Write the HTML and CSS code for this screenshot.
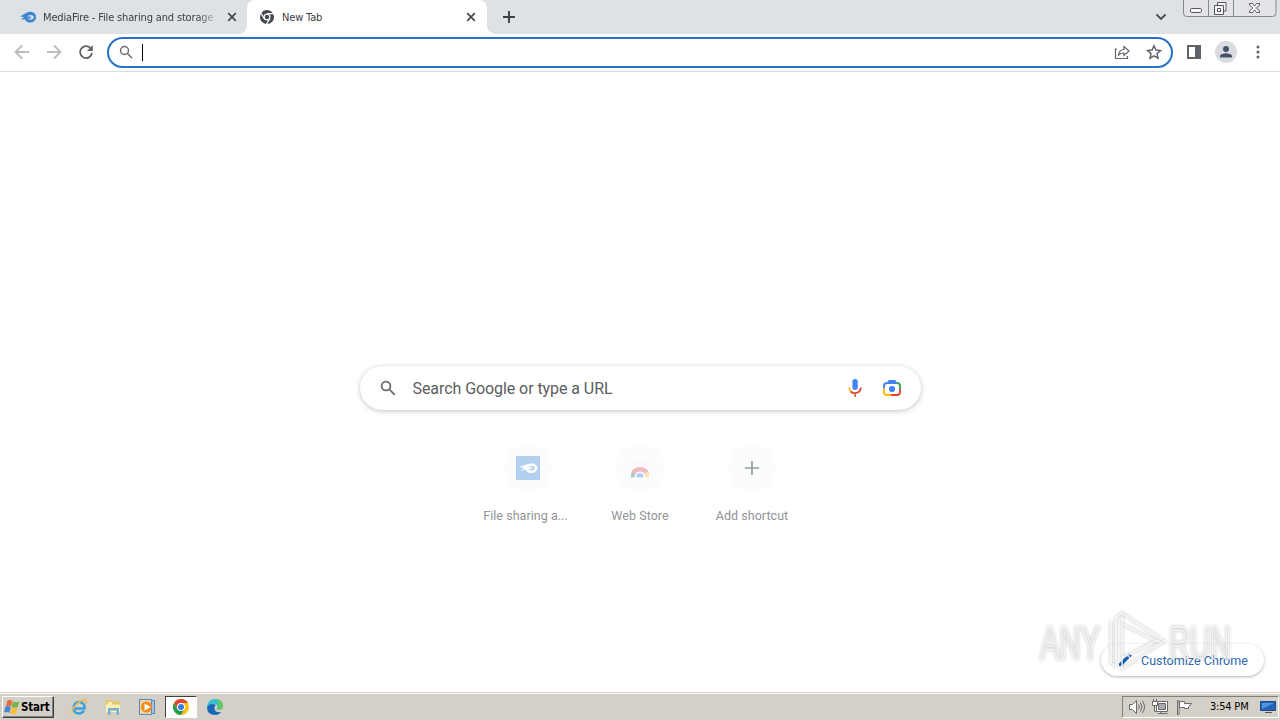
FILE: index.html
```
<!DOCTYPE html>
<html lang="en">
  <head>
    <meta charset="UTF-8" />
    <meta name="viewport" content="width=device-width, initial-scale=1.0" />
    <title>New Tab</title>
    <link rel="stylesheet" href="styles.css">
  </head>
  <body>
    <header class="tabstrip">
      <div class="tab tab-first">
        <svg class="favicon" viewBox="0 0 16 16">
          <path fill="#3b86cf" d="M0 7.4 7 3.4C12 1.7 16 4.2 16 8s-3.5 6-7 5.5c-2.300-.3-3.600-1.600-4-3.200L1 10.600 4 8z" />
          <ellipse cx="10.500" cy="8.300" rx="3.200" ry="2.300" fill="#dee1e6" />
          <path fill="#3b86cf" d="M6 7.600h3.500q1.500 0 1.500 1t-1.500 1H7z" />
        </svg>
        <span class="tab-title fade">MediaFire - File sharing and storage</span>
        <svg class="close" viewBox="0 0 10 10"><path d="M1.200 1.200 8.800 8.800M8.800 1.200 1.200 8.800" /></svg>
      </div>
      <div class="tab tab-active">
        <svg class="favicon" viewBox="0 0 16 16">
          <circle cx="8" cy="8" r="7" fill="#45484c" />
          <circle cx="8" cy="8" r="2.900" fill="#45484c" stroke="#fff" stroke-width="1.300" />
          <path d="M8 4.700h7M5.200 9.800 1.700 3.700M10.800 9.800 7.300 15.500" stroke="#fff" stroke-width="1.200" />
        </svg>
        <span class="tab-title">New Tab</span>
        <svg class="close" viewBox="0 0 10 10"><path d="M1.200 1.200 8.800 8.800M8.800 1.200 1.200 8.800" /></svg>
      </div>
      <svg class="new-tab" viewBox="0 0 14 14"><path d="M7 1v12M1 7h12" /></svg>
      <svg class="tab-search" viewBox="0 0 12 8"><path d="m1.500 1.500 4.500 4.500 4.500-4.500" /></svg>
      <div class="window-controls">
        <svg viewBox="0 0 94 17">
          <path class="frame" d="M.5 0v13q0 3.500 3 3.500h86q3.500 0 3.500-3.500V0M25.500 0v16.500M50.500 0v16.500" />
          <rect class="glyph" x="7.500" y="8.500" width="11" height="4" rx="1" />
          <path class="glyph" d="M34.500 2.500h8.500v8.500h-2.500M34.500 2.500v3M31.500 5.500h9v9h-9zM34.500 8.500h3v3h-3z" />
          <path class="glyph" d="M66.500 3.500h3l2 2.500 2-2.500h3v1.500l-3 3 3 3v1.500h-3l-2-2.500-2 2.500h-3V11l3-3-3-3z" />
        </svg>
      </div>
    </header>

    <nav class="toolbar">
      <svg class="nav-icon disabled" viewBox="0 0 16 16"><path d="M15 8H2M8 1.500 1.500 8 8 14.500" /></svg>
      <svg class="nav-icon disabled" viewBox="0 0 16 16"><path d="M1 8h13M8 1.500 14.500 8 8 14.500" /></svg>
      <svg class="nav-icon reload" viewBox="0 0 16 16">
        <path d="M13.200 5A6 6 0 1 0 14 9" />
        <path class="solid" d="M14.800 1v6H9z" />
      </svg>
      <div class="omnibox">
        <svg class="omni-search" viewBox="0 0 14 14"><circle cx="5.500" cy="5.500" r="4" /><path d="m8.500 8.500 4.500 4.500" /></svg>
        <span class="caret"></span>
        <svg class="share" viewBox="0 0 16 16">
          <path d="M3 5H1.500v9.500h12V12" />
          <path d="M4.500 11c.5-3.500 2.500-5.500 5.500-5.500V2.500l5 4.500-5 4.500V9C7.500 9 6 9.500 4.500 11z" />
        </svg>
        <svg class="star" viewBox="0 0 16 16">
          <path d="m8 1.800 1.900 4.300 4.600.4-3.500 3.100 1 4.600L8 11.800l-4 2.400 1-4.600-3.500-3.100 4.600-.4z" />
        </svg>
      </div>
      <svg class="side-panel" viewBox="0 0 14 14"><path d="M1 1h12v12H1zM9 1h4v12H9z" /><path class="solid" d="M9 1h4v12H9z" /></svg>
      <svg class="avatar" viewBox="0 0 22 22">
        <circle cx="11" cy="11" r="11" fill="#dadce0" />
        <circle cx="11" cy="8" r="3" fill="#46526b" />
        <path d="M5 16.500v-1.300C5 13.200 9 12.300 11 12.300s6 .9 6 2.900v1.300z" fill="#46526b" />
      </svg>
      <svg class="kebab" viewBox="0 0 4 14"><circle cx="2" cy="2" r="1.500" /><circle cx="2" cy="7" r="1.500" /><circle cx="2" cy="12" r="1.500" /></svg>
    </nav>

    <main class="page">
      <div class="searchbox">
        <svg class="glass" viewBox="0 0 16 16"><circle cx="6" cy="6" r="4.400" /><path d="m9.300 9.300 5.500 5.500" /></svg>
        <span class="placeholder">Search Google or type a URL</span>
        <svg class="mic" viewBox="0 0 16 20">
          <rect x="5.400" y="1" width="5.400" height="11" rx="2.700" fill="#4285f4" />
          <path d="M2.300 9.500c0 2 .7 3.400 1.800 4.300" stroke="#fbbc04" />
          <path d="M3.700 13.500c2.500 2.500 7.500 2.300 9.300-1 .5-.9.800-1.900.8-3" stroke="#ea4335" />
          <path d="M8.100 15.500V19" stroke="#a08a3c" />
        </svg>
        <svg class="lens" viewBox="0 0 20 18">
          <path d="M2 9.500V7q0-3 3-3h10.500" stroke="#4285f4" />
          <path d="M6.500 3.500 7.300 2h5.400l.8 1.500" stroke="#4285f4" />
          <path d="M15 4q3 0 3 3v3" stroke="#34a853" />
          <path d="M2 9.500V13q0 3 3 3h4" stroke="#fbbc04" />
          <path d="M9 16h6q3 0 3-3v-3" stroke="#ea4335" />
          <circle cx="10" cy="10" r="3.100" fill="#4285f4" />
        </svg>
      </div>

      <div class="shortcuts">
        <div class="shortcut">
          <span class="tile">
            <svg width="24" height="24" viewBox="0 0 24 24">
              <path fill="#b4d0f1" d="M0 0h24v24H0z" />
              <path fill="#fff" d="M3 11 13 7.800c5-1.300 8.300.7 8.300 4.200s-3 5-6.300 5c-3.200 0-4.700-1.300-5-3.500l-5.500 1L8 12z" />
              <ellipse cx="15.500" cy="12.200" rx="3.300" ry="2.200" fill="#b4d0f1" />
              <path fill="#fff" d="M10 11.300h4.700q1.300 0 1.300.9t-1.300.9H10z" />
            </svg>
          </span>
          <span class="label">File sharing a...</span>
        </div>
        <div class="shortcut">
          <span class="tile">
            <svg width="24" height="24" viewBox="0 0 24 24">
              <path fill="#fafafa" d="M4 3h16v8H4z" />
              <path d="M4.700 21.500a7.500 7.500 0 0 1 1.500-5" stroke="#a9cfb5" stroke-width="4" fill="none" />
              <path d="M5 17.500a8 8 0 0 1 14 0" stroke="#f0b9c2" stroke-width="4.500" fill="none" />
              <path d="M18 16.500a8 8 0 0 1 1.300 5" stroke="#fce6b4" stroke-width="4" fill="none" />
              <path d="M8.500 21.500v-1a3.500 3.500 0 0 1 7 0v1z" fill="#b4cdf8" />
            </svg>
          </span>
          <span class="label">Web Store</span>
        </div>
        <div class="shortcut">
          <span class="tile">
            <svg width="14" height="14" viewBox="0 0 14 14"><path d="M7 0v14M0 7h14" stroke="#97999b" stroke-width="1.700" /></svg>
          </span>
          <span class="label">Add shortcut</span>
        </div>
      </div>

      <button class="customize">
        <svg width="14" height="14" viewBox="0 0 14 14"><path fill="#1a62bd" d="M1 10.500 9 2.500 11.500 5 3.500 13H1zM9.800 1.700l1-1q.6-.5 1.200 0l1.300 1.300q.5.600 0 1.200l-1 1z" /></svg>
        <span>Customize Chrome</span>
      </button>

      <svg class="watermark" viewBox="0 0 204 74">
        <g class="mark">
          <text x="4" y="51" textLength="60" lengthAdjust="spacingAndGlyphs">ANY</text>
          <text x="133" y="51" textLength="62" lengthAdjust="spacingAndGlyphs">RUN</text>
          <path d="M75 13v42l5 3V9l6-4v11l34 17-34 17v11l42-28L86 5v44" />
        </g>
      </svg>
    </main>

    <footer class="taskbar">
      <div class="start">
        <svg width="16" height="16" viewBox="0 0 16 16">
          <path fill="#e8683c" d="M3.500 1.500q2.300-1 5 .5L7.300 7.500Q4.500 6 1.800 7z" />
          <path fill="#72b74e" d="M9 2.500q2.800 1.300 6.500 0L13.800 8Q10.500 9.300 7.800 8z" />
          <path fill="#4285d4" d="M1.600 7.500q2.500-1 5.200.5L5.300 14Q3 12.500 0 13.500z" />
          <path fill="#f6bd32" d="M7.500 8.500q2.700 1.300 6.100 0L12 14.300q-3 1.300-6 0z" />
        </svg>
        <span>Start</span>
      </div>
      <div class="launch">
        <svg width="18" height="18" viewBox="0 0 18 18">
          <path d="M4 10.500h10.500C15 6.500 12.500 4 9.200 4S3.700 6.500 3.700 10s2.300 5.500 5.300 5.500c2.500 0 4-1 5-2.800" fill="none" stroke="#3aa0df" stroke-width="2.500" />
          <path d="M2.500 16C-.5 14 7 3.500 13.500 2c3-.7 3.800 1 2.500 3.500" fill="none" stroke="#e9bd4b" stroke-width="1.400" />
        </svg>
        <svg width="18" height="18" viewBox="0 0 18 18">
          <path fill="#e8c866" d="M2 2h6l1 1.500h7V14H2z" />
          <path fill="#faf0b4" d="M4 4h4v3H4zM2 6.500h14V14H2z" />
          <path fill="#79afd1" d="M4 10h11v7h-2.500v-4.500h-6V17H4z" />
        </svg>
        <svg width="18" height="18" viewBox="0 0 18 18">
          <path fill="#efd7a2" stroke="#5787bd" d="M1.500 1.500h12v15h-12z" />
          <path fill="#9dc4e8" stroke="#5787bd" d="M13.500 2.500h3v13h-3z" />
          <circle cx="8.500" cy="9" r="5.500" fill="#f28b25" />
          <path fill="#fff" d="m6.500 5.500 6 3.500-6 3.500z" />
        </svg>
        <span class="running">
          <svg width="16" height="16" viewBox="0 0 16 16">
            <circle cx="8" cy="8" r="8" fill="#fbc116" />
            <path fill="#df4737" d="M1.070 4A8 8 0 0 1 14.930 4H8L4.540 10z" />
            <path fill="#229c50" d="M1.070 4A8 8 0 0 0 8 16l3.460-6H4.540z" />
            <circle cx="8" cy="8" r="4" fill="#fff" />
            <circle cx="8" cy="8" r="3" fill="#3c78df" />
          </svg>
        </span>
        <svg width="18" height="18" viewBox="0 0 18 18">
          <path fill="#1a68b5" d="M1 9q0 8 8 8 4 0 6.500-3-6 1-7-3-.5-3 1.500-4Q3 3 1 9z" />
          <path fill="#35bfd2" d="M1 9C2 3 5 1 9 1c5 0 8 3 8 7 0 3-2.500 4-5.500 3.500-1.500-.4-1-1 0-2C12 5 5 4 1 9z" />
          <path fill="#63c863" d="M11 1.300C15 2 17 5 17 8c0 3-2.500 4-5.500 3.500-1-.4-.5-1 0-2C13 7 12 3 11 1.300z" />
        </svg>
      </div>
      <div class="tray">
        <svg width="18" height="16" viewBox="0 0 18 16">
          <path d="M1.500 5.500h3l4-4v13l-4-4h-3z" fill="#fff" />
          <path d="M10.500 5.500q1.500 2.500 0 5M12.500 3.500q3 4.500 0 9M14.500 2q4 6 0 12" fill="none" />
        </svg>
        <svg width="18" height="16" viewBox="0 0 18 16">
          <path d="M4.500 2.500h11v10h-11z" fill="#fff" />
          <path d="M6.500 4.500h7v6h-7z" fill="#aaa" />
          <path d="M.5 2.500h5v4h-5zM1.500 0v2.500M4.500 0v2.500M2.500 6.500v6h2M8.500 12.500v2h-2.500M8.500 14.500h7" fill="#fff" />
        </svg>
        <svg width="18" height="16" viewBox="0 0 18 16">
          <path d="M1.500 1.500h1.500v14H1.500z" fill="#fff" />
          <path d="M3.500 2.500h5v2h7l-3 3.500 0 1.500H8.500v-1h-5z" fill="#fff" />
        </svg>
        <time>3:54 PM</time>
        <svg width="16" height="16" viewBox="0 0 16 16">
          <path d="M.5 2.500h15v9H.5z" fill="#2463bd" stroke="#234982" />
          <path d="M2 4h12L2 10z" fill="#5096df" stroke="none" />
          <path d="M5 13.500h7" stroke="#555" />
        </svg>
      </div>
    </footer>
  </body>
</html>
```

FILE: styles.css
```
*,
*::before,
*::after {
  box-sizing: border-box;
}

body {
  display: flex;
  flex-direction: column;
  width: 1280px;
  height: 720px;
  margin: 0;
  overflow: hidden;
  background: #fff;
  font-family: Roboto, sans-serif;
}

svg {
  display: block;
  flex: none;
}

/* Tabs */
.tabstrip {
  display: flex;
  height: 34px;
  background: #dee1e6;
}

.tab {
  position: relative;
  display: flex;
  align-items: center;
  width: 240px;
  padding: 0 11px 0 12px;
  color: #3c4043;
  font: 11px "DejaVu Sans Condensed", "DejaVu Sans", sans-serif;
}

.tab-first {
  width: 247px;
  padding: 0 10px 0 20px;
}

.tab-active {
  background: #fff;
  border-radius: 8px 8px 0 0;
}

.tab-active::before,
.tab-active::after {
  content: "";
  position: absolute;
  bottom: 0;
  left: -8px;
  width: 8px;
  height: 8px;
  background: radial-gradient(circle at 0 0, transparent 7.5px, #fff 8px);
}

.tab-active::after {
  left: auto;
  right: -8px;
  background: radial-gradient(circle at 100% 0, transparent 7.5px, #fff 8px);
}

.favicon {
  width: 16px;
  height: 16px;
}

.tab-title {
  flex: 1;
  margin: 0 8px 0 7px;
  white-space: nowrap;
  letter-spacing: -0.16px;
}

.fade {
  -webkit-mask-image: linear-gradient(to right, #000 88%, transparent);
  mask-image: linear-gradient(to right, #000 88%, transparent);
}

.close {
  width: 10px;
  height: 10px;
  fill: none;
  stroke: #45484c;
  stroke-width: 1.7;
}

.new-tab {
  width: 14px;
  height: 14px;
  margin: 10px 0 0 15px;
  stroke: #3c4043;
  stroke-width: 1.9;
}

.tab-search {
  width: 12px;
  height: 8px;
  margin: 13px 16px 0 auto;
  fill: none;
  stroke: #45484c;
  stroke-width: 1.8;
}

.window-controls {
  width: 97px;
}

.window-controls svg {
  width: 94px;
  height: 17px;
}

.frame {
  fill: #e2e4e8;
  stroke: #85888e;
}

.glyph {
  fill: #f5f5f5;
  stroke: #55585d;
}

/* Toolbar */
.toolbar {
  display: flex;
  align-items: center;
  height: 38px;
  padding: 0 20px 1px 14px;
  border-bottom: 1px solid #dcdde0;
}

.nav-icon {
  width: 16px;
  height: 16px;
  margin-right: 16px;
  fill: none;
  stroke: #5f6368;
  stroke-width: 1.8;
}

.disabled {
  stroke: #babcbe;
}

.reload {
  margin-right: 13px;
}

.solid {
  fill: #5f6368;
  stroke: none;
}

.omnibox {
  display: flex;
  align-items: center;
  width: 1066px;
  height: 31px;
  margin-top: 1px;
  padding: 0 9px 1px 10px;
  border: 2px solid #2671c9;
  border-radius: 16px;
}

.omni-search {
  width: 14px;
  height: 14px;
  fill: none;
  stroke: #6b6f73;
  stroke-width: 1.5;
}

.caret {
  width: 1px;
  height: 17px;
  margin-left: 9px;
  background: #000;
}

.share,
.star {
  width: 16px;
  height: 16px;
  fill: none;
  stroke: #5f6368;
  stroke-width: 1.2;
}

.share {
  margin-left: auto;
  margin-right: 16px;
}

.star {
  stroke-width: 1.5;
}

.side-panel {
  width: 14px;
  height: 14px;
  margin-left: 14px;
  fill: none;
  stroke: #5f6368;
  stroke-width: 2;
}

.avatar {
  width: 22px;
  height: 22px;
  margin-left: 14px;
}

.kebab {
  width: 4px;
  height: 14px;
  margin-left: auto;
  fill: #5f6368;
}

/* New tab page */
.page {
  position: relative;
  display: flex;
  flex-direction: column;
  align-items: center;
  height: 620px;
  padding-top: 294px;
}

.searchbox {
  display: flex;
  align-items: center;
  width: 561px;
  height: 44px;
  padding: 0 19px 0 20px;
  border-radius: 22px;
  background: #fff;
  box-shadow: 0 1px 5px rgba(32, 33, 36, 0.28);
}

.glass {
  width: 16px;
  height: 16px;
  fill: none;
  stroke: #6b6b6b;
  stroke-width: 1.8;
}

.placeholder {
  margin-left: 17px;
  color: #5b5d60;
  font-size: 16px;
  letter-spacing: -0.07px;
}

.mic {
  width: 16px;
  height: 20px;
  margin-left: auto;
  fill: none;
  stroke-width: 1.8;
}

.lens {
  width: 20px;
  height: 18px;
  margin-left: 19px;
  fill: none;
  stroke-width: 1.9;
}

.shortcuts {
  display: flex;
  margin-top: 34px;
}

.shortcut {
  display: flex;
  flex-direction: column;
  align-items: center;
  width: 112px;
}

.tile {
  display: flex;
  align-items: center;
  justify-content: center;
  width: 48px;
  height: 48px;
  border-radius: 50%;
  background: #fbfcfc;
}

.label {
  margin-top: 16px;
  color: #929496;
  font-size: 12.5px;
  line-height: 16px;
  letter-spacing: 0.04px;
  white-space: nowrap;
}

.shortcut:first-child .label {
  margin-right: 5px;
}

.customize {
  position: absolute;
  right: 16px;
  bottom: 16px;
  display: flex;
  align-items: center;
  gap: 9px;
  width: 163px;
  height: 32px;
  padding: 0 0 0 17px;
  border: 0;
  border-radius: 16px;
  background: #fff;
  box-shadow: 0 1px 3px rgba(60, 64, 67, 0.4);
  color: #2d66ad;
  font: 12.5px Roboto, sans-serif;
  letter-spacing: 0.04px;
  white-space: nowrap;
}

.watermark {
  position: absolute;
  left: 1036px;
  top: 536px;
  width: 204px;
  height: 74px;
  overflow: visible;
  pointer-events: none;
}

.mark {
  fill: none;
  stroke: rgba(255, 255, 255, 0.65);
  stroke-width: 2;
  filter: drop-shadow(0 0 1.5px rgba(0, 0, 0, 0.4));
}

.mark text {
  fill: rgba(255, 255, 255, 0.35);
  stroke-width: 1.5;
  font: 46px "Liberation Sans Narrow", "Liberation Sans", sans-serif;
}

/* Taskbar */
.taskbar {
  display: flex;
  align-items: center;
  height: 28px;
  padding: 1px 1px 1px 2px;
  border-top: 1px solid #d4d0c8;
  background: #d4d0c8;
  box-shadow: inset 0 1px #fff;
}

.start {
  display: flex;
  align-items: center;
  gap: 1px;
  width: 52px;
  height: 22px;
  padding-left: 1px;
  border: 1px solid;
  border-color: #fff #404040 #404040 #fff;
  box-shadow: inset -1px -1px #808080;
  color: #000;
  font: bold 11.5px "DejaVu Sans Condensed", "DejaVu Sans", sans-serif;
  letter-spacing: -0.2px;
}

.launch {
  display: flex;
  align-items: center;
  margin-left: 16px;
  gap: 16px;
}

.running {
  display: flex;
  align-items: center;
  justify-content: center;
  width: 32px;
  height: 22px;
  margin: 0 -7px;
  border: 1px solid;
  border-color: #404040 #fff #fff #404040;
  background: #fff;
}

.tray {
  display: flex;
  align-items: center;
  width: 157px;
  height: 22px;
  margin-left: auto;
  padding-left: 5px;
  gap: 6px;
  border: 1px solid;
  border-color: #808080 #fff #fff #808080;
  stroke: #696969;
}

.tray time {
  margin: 0 6px 0 10px;
  color: #000;
  font: 11px "DejaVu Sans Condensed", "DejaVu Sans", sans-serif;
  letter-spacing: -0.2px;
  white-space: nowrap;
}
```
